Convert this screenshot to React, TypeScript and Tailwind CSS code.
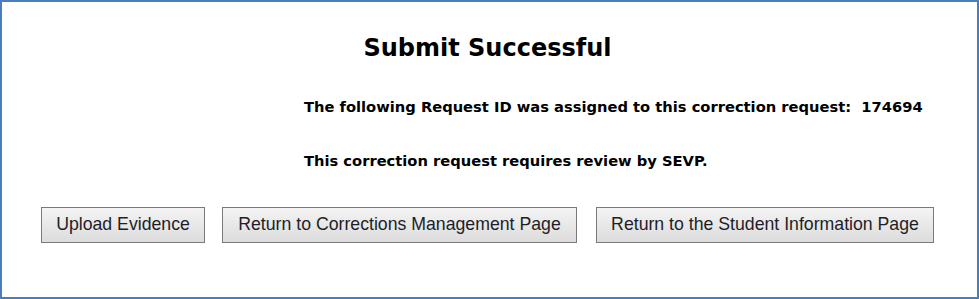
import React from "react";

const btn =
  "h-[36px] border border-[#7a7a7a] bg-gradient-to-b from-[#f4f4f4] to-[#dcdcdc] text-[17.7px] text-[#1e1e28] leading-none px-[14px] whitespace-nowrap";

export default function App() {
  return (
    <div
      className="w-[979px] h-[299px] border-2 border-[#4a7ebb] bg-white box-border flex flex-col"
      style={{ fontFamily: '"DejaVu Sans", Verdana, sans-serif' }}
    >
      <h1 className="text-center text-[24px] font-bold text-black mt-[31px] leading-[30px] pr-[4px]">
        Submit Successful
      </h1>
      <div className="ml-[302px] text-[14.7px] font-bold text-black leading-[18px]">
        <p className="mt-[35px] whitespace-pre">
          {"The following Request ID was assigned to this correction request:  174694"}
        </p>
        <p className="mt-[36px]">This correction request requires review by SEVP.</p>
      </div>
      <div
        className="flex ml-[39px] mt-[37px]"
        style={{ fontFamily: '"Liberation Sans", Arial, sans-serif' }}
      >
        <button className={btn + " w-[164px]"}>Upload Evidence</button>
        <button className={btn + " w-[355px] ml-[17px]"}>Return to Corrections Management Page</button>
        <button className={btn + " w-[338px] ml-[19px]"}>Return to the Student Information Page</button>
      </div>
    </div>
  );
}
